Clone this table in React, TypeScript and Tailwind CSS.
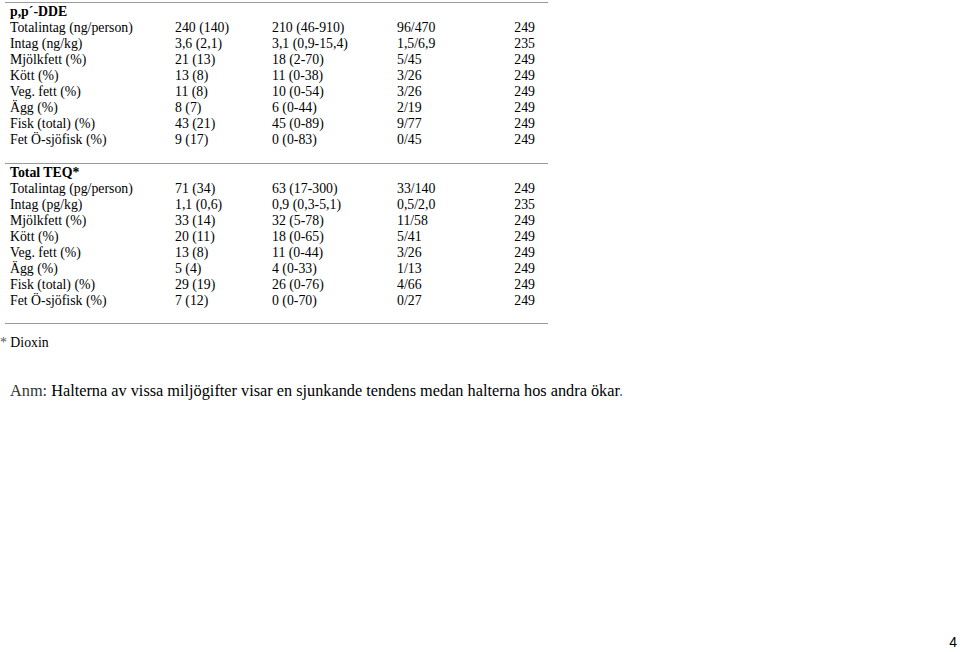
import React from "react";

const dde: string[][] = [
  ["Totalintag (ng/person)", "240 (140)", "210 (46-910)", "96/470", "249"],
  ["Intag (ng/kg)", "3,6 (2,1)", "3,1 (0,9-15,4)", "1,5/6,9", "235"],
  ["Mjölkfett (%)", "21 (13)", "18 (2-70)", "5/45", "249"],
  ["Kött (%)", "13 (8)", "11 (0-38)", "3/26", "249"],
  ["Veg. fett (%)", "11 (8)", "10 (0-54)", "3/26", "249"],
  ["Ägg (%)", "8 (7)", "6 (0-44)", "2/19", "249"],
  ["Fisk (total) (%)", "43 (21)", "45 (0-89)", "9/77", "249"],
  ["Fet Ö-sjöfisk (%)", "9 (17)", "0 (0-83)", "0/45", "249"],
];

const teq: string[][] = [
  ["Totalintag (pg/person)", "71 (34)", "63 (17-300)", "33/140", "249"],
  ["Intag (pg/kg)", "1,1 (0,6)", "0,9 (0,3-5,1)", "0,5/2,0", "235"],
  ["Mjölkfett (%)", "33 (14)", "32 (5-78)", "11/58", "249"],
  ["Kött (%)", "20 (11)", "18 (0-65)", "5/41", "249"],
  ["Veg. fett (%)", "13 (8)", "11 (0-44)", "3/26", "249"],
  ["Ägg (%)", "5 (4)", "4 (0-33)", "1/13", "249"],
  ["Fisk (total) (%)", "29 (19)", "26 (0-76)", "4/66", "249"],
  ["Fet Ö-sjöfisk (%)", "7 (12)", "0 (0-70)", "0/27", "249"],
];

function Row({ r }: { r: string[] }) {
  return (
    <div className="grid grid-cols-[165px_97px_125px_100px_38px] h-[16px] leading-[16px]">
      <div className="whitespace-nowrap">{r[0]}</div>
      <div className="whitespace-nowrap">{r[1]}</div>
      <div className="whitespace-nowrap">{r[2]}</div>
      <div className="whitespace-nowrap">{r[3]}</div>
      <div className="whitespace-nowrap text-right">{r[4]}</div>
    </div>
  );
}

function Section({ title, rows, pb }: { title: string; rows: string[][]; pb: string }) {
  return (
    <div className={`border-t-[1.5px] border-[#9a9a9a] w-[543px] pl-[5px] pt-[1px] ${pb}`}>
      <div className="h-[16px] leading-[16px] font-bold">{title}</div>
      {rows.map((r, i) => (
        <Row key={i} r={r} />
      ))}
    </div>
  );
}

const serif = '"Liberation Serif", "Times New Roman", serif';

export default function App() {
  return (
    <div
      className="relative w-[960px] h-[652px] bg-white text-black overflow-hidden text-[13.8px]"
      style={{ fontFamily: serif }}
    >
      <div className="pt-[2px] pl-[5px]">
        <Section title="p,p´-DDE" rows={dde} pb="pb-[15px]" />
        <Section title="Total TEQ*" rows={teq} pb="pb-[14px]" />
        <div className="border-t-[1.5px] border-[#9a9a9a] w-[543px]" />
      </div>
      <div className="mt-[11px] leading-[16px] whitespace-nowrap">
        <span className="text-[#555]">*</span> Dioxin
      </div>
      <div
        className="mt-[30px] pl-[10px] text-[16.3px] leading-[20px] whitespace-nowrap"
        style={{ fontFamily: serif }}
      >
        <span className="text-[#333]">Anm:</span> Halterna av vissa miljögifter visar en sjunkande tendens medan halterna hos andra ökar
        <span className="text-[#4a6fb5]">.</span>
      </div>
      <div
        className="absolute right-[3px] bottom-[2px] text-[14px] leading-[16px]"
        style={{ fontFamily: '"Liberation Sans", Arial, sans-serif' }}
      >
        4
      </div>
    </div>
  );
}
